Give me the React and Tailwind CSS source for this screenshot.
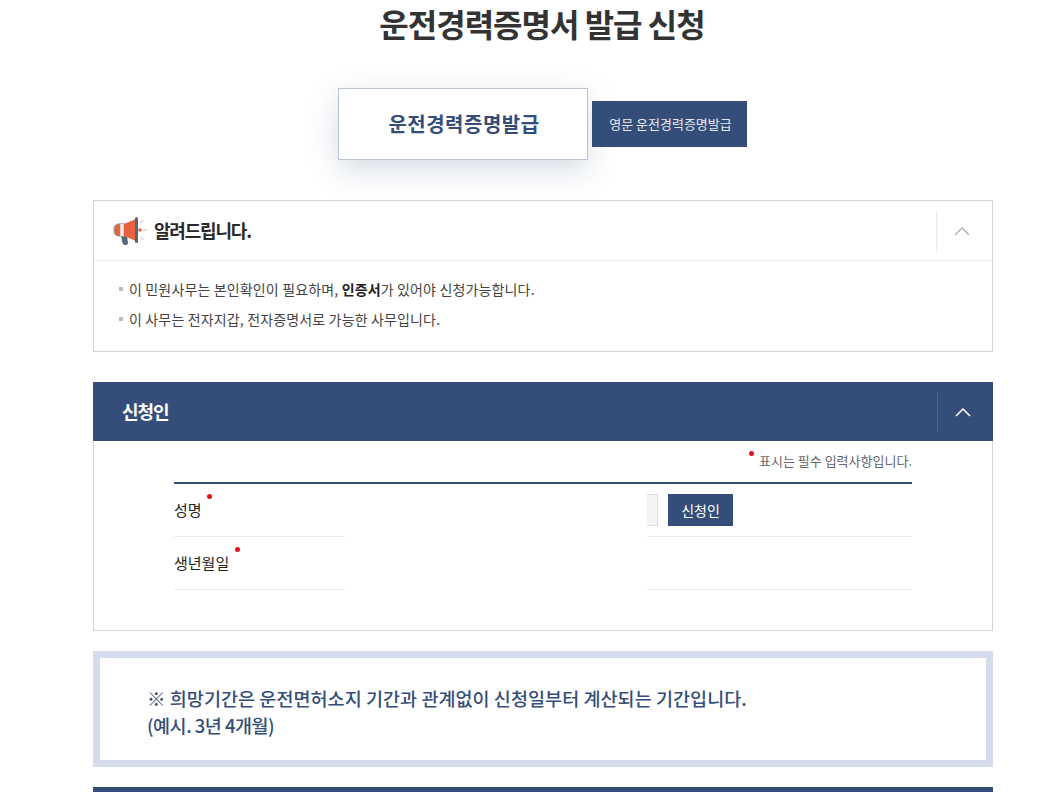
const font = { fontFamily: '"Noto Sans CJK KR", "Noto Sans", sans-serif' };

function Dot({ className }) {
  return <span className={`absolute w-[5px] h-[5px] rounded-full bg-[#e8101a] ${className}`} />;
}

function Megaphone() {
  return (
    <svg width="34" height="30" viewBox="0 0 34 30" fill="none">
      <path d="M8 20 L14 20 L15 27 Q15 29 12 29 Q10 29 9.500 27 Z" fill="#56667a" />
      <path d="M7 8 V20 H6 Q1 20 1 14 Q1 8 6 8 Z" fill="#e8623f" stroke="#8a8f98" strokeWidth="1" />
      <rect x="7" y="7.500" width="4" height="13" fill="#f1ece6" stroke="#8a8f98" strokeWidth="0.6" />
      <path d="M11 8 L23 3 V25 L11 20 Z" fill="#e8623f" />
      <rect x="22" y="1" width="3" height="26" rx="1.500" fill="#56667a" />
      <circle cx="27" cy="14" r="1.800" fill="#e8623f" />
      <path d="M27.500 7 L30.500 4 M30 14 H34 M27.500 21 L30.500 24" stroke="#b9b9b9" strokeWidth="1" />
    </svg>
  );
}

function Chevron({ color }) {
  return (
    <svg width="16" height="9" viewBox="0 0 16 9" fill="none">
      <path d="M1 8 L8 1 L15 8" stroke={color} strokeWidth="1.500" />
    </svg>
  );
}

export default function App() {
  return (
    <div className="w-[1056px] h-[792px] overflow-hidden bg-white" style={font}>
      <h1 className="w-[1084px] h-[46px] text-center text-[32px] leading-[46px] font-bold text-[#333] tracking-[-1px]">
        운전경력증명서 발급 신청
      </h1>

      <div className="mt-[42px] ml-[338px] flex items-center gap-1">
        <div className="w-[250px] h-[72px] pl-[2px] flex items-center justify-center border border-[#b8c2d6] bg-white shadow-[0_10px_30px_rgba(52,78,120,0.2)] text-[20px] font-bold text-[#344e79] tracking-[0.5px]">
          운전경력증명발급
        </div>
        <div className="w-[155px] h-[46px] pl-[2px] flex items-center justify-center bg-[#344e79] text-[13px] text-[#e6e9ef]">
          영문 운전경력증명발급
        </div>
      </div>

      <div className="ml-[93px] mt-[40px] w-[900px] flex flex-col">
        <section className="h-[152px] border border-[#d5d5d5]">
          <div className="h-[60px] flex items-center border-b border-[#ebebeb]">
            <div className="flex-1 flex items-center gap-[7px] pl-[19px]">
              <Megaphone />
              <span className="text-[18px] font-bold text-[#2a2a2a] tracking-[-1.2px]">알려드립니다.</span>
            </div>
            <div className="w-[56px] h-[40px] pr-[5px] pt-[2px] flex items-center justify-center border-l border-[#ebebeb]">
              <Chevron color="#b5b5b5" />
            </div>
          </div>
          <ul className="pt-[13px] pl-[25px] text-[14px] leading-[30px] text-[#444] tracking-[0.15px]">
            <li className="flex items-center gap-[6px]">
              <span className="w-[4px] h-[4px] bg-[#bbb]" />
              <span>이 민원사무는 본인확인이 필요하며, <b className="text-[#222] font-bold">인증서</b>가 있어야 신청가능합니다.</span>
            </li>
            <li className="flex items-center gap-[6px]">
              <span className="w-[4px] h-[4px] bg-[#bbb]" />
              <span>이 사무는 전자지갑, 전자증명서로 가능한 사무입니다.</span>
            </li>
          </ul>
        </section>

        <section className="mt-[30px] h-[249px] border-x border-b border-[#d5d5d5]">
          <div className="-mx-px h-[59px] flex items-center bg-[#344e79]">
            <span className="flex-1 pl-[29px] text-[18px] font-bold text-white tracking-[-1px]">신청인</span>
            <div className="w-[56px] h-[40px] pr-[5px] pt-[2px] flex items-center justify-center border-l border-[#4a6189]">
              <Chevron color="#ffffff" />
            </div>
          </div>
          <div className="mx-[80px] w-[738px]">
            <p className="relative h-[43px] pt-[10px] text-right text-[13px] leading-[20px] text-[#666] border-b-2 border-[#344e79]">
              <Dot className="right-[158px] top-[10px]" />
              표시는 필수 입력사항입니다.
            </p>
            <div className="h-[53px] flex">
              <div className="relative w-[171px] flex items-center border-b border-[#ebebeb] text-[15px] text-[#222]">
                <span>성명</span>
                <Dot className="left-[33px] top-[10px]" />
              </div>
              <div className="w-[302px]" />
              <div className="flex-1 flex items-center gap-[10px] border-b border-[#ebebeb]">
                <div className="w-[11px] h-[32px] bg-[#f3f3f3] border-y border-r border-[#dddddd]" />
                <div className="w-[65px] h-[32px] flex items-center justify-center bg-[#344e79] text-[14px] text-white">신청인</div>
              </div>
            </div>
            <div className="h-[53px] flex">
              <div className="relative w-[171px] flex items-center border-b border-[#ebebeb] text-[15px] text-[#222]">
                <span>생년월일</span>
                <Dot className="left-[61px] top-[10px]" />
              </div>
              <div className="w-[302px]" />
              <div className="flex-1 border-b border-[#ebebeb]" />
            </div>
          </div>
        </section>

        <div className="mt-[20px] h-[116px] flex flex-col justify-center border-[7px] border-[#d5ddec] pl-[47px] pt-[6px] text-[18.500px] leading-[27px] font-medium text-[#344e79]">
          <p className="tracking-[0.05px]">※ 희망기간은 운전면허소지 기간과 관계없이 신청일부터 계산되는 기간입니다.</p>
          <p className="tracking-[-0.5px]">(예시. 3년 4개월)</p>
        </div>

        <div className="mt-[20px] h-[40px] bg-[#344e79]" />
      </div>
    </div>
  );
}
